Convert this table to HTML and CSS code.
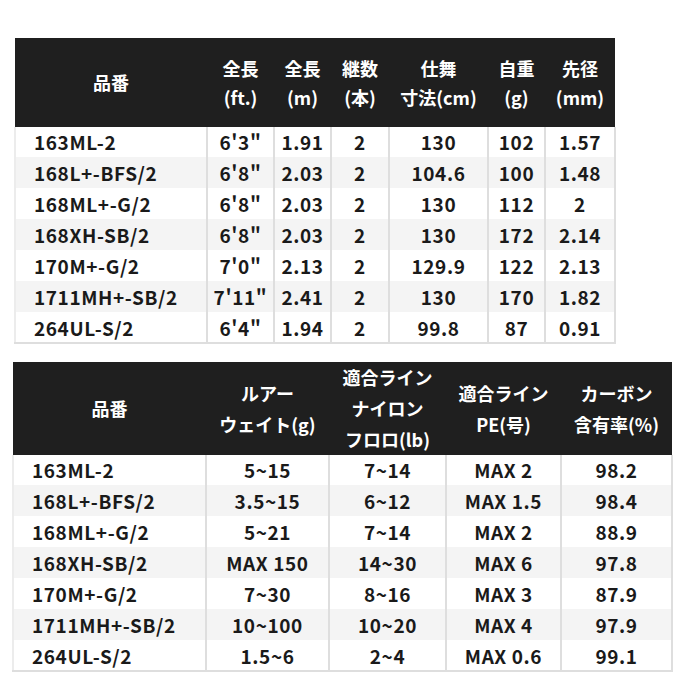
FILE: index.html
```html
<!DOCTYPE html>
<html lang="ja">
<head>
<meta charset="utf-8">
<link rel="stylesheet" href="styles.css">
</head>
<body>
<div class="page">
  <table class="spec spec-a">
    <colgroup>
      <col style="width:192px"><col style="width:67px"><col style="width:57px"><col style="width:58px"><col style="width:99px"><col style="width:57px"><col style="width:70px">
    </colgroup>
    <thead>
      <tr>
        <th>品番</th>
        <th>全長<br>(ft.)</th>
        <th>全長<br>(m)</th>
        <th>継数<br>(本)</th>
        <th>仕舞<br>寸法(cm)</th>
        <th>自重<br>(g)</th>
        <th>先径<br>(mm)</th>
      </tr>
    </thead>
    <tbody>
      <tr><td>163ML-2</td><td>6'3"</td><td>1.91</td><td>2</td><td>130</td><td>102</td><td>1.57</td></tr>
      <tr><td>168L+-BFS/2</td><td>6'8"</td><td>2.03</td><td>2</td><td>104.6</td><td>100</td><td>1.48</td></tr>
      <tr><td>168ML+-G/2</td><td>6'8"</td><td>2.03</td><td>2</td><td>130</td><td>112</td><td>2</td></tr>
      <tr><td>168XH-SB/2</td><td>6'8"</td><td>2.03</td><td>2</td><td>130</td><td>172</td><td>2.14</td></tr>
      <tr><td>170M+-G/2</td><td>7'0"</td><td>2.13</td><td>2</td><td>129.9</td><td>122</td><td>2.13</td></tr>
      <tr><td>1711MH+-SB/2</td><td>7'11"</td><td>2.41</td><td>2</td><td>130</td><td>170</td><td>1.82</td></tr>
      <tr><td>264UL-S/2</td><td>6'4"</td><td>1.94</td><td>2</td><td>99.8</td><td>87</td><td>0.91</td></tr>
    </tbody>
  </table>

  <table class="spec spec-b">
    <colgroup>
      <col style="width:193px"><col style="width:123px"><col style="width:117px"><col style="width:115px"><col style="width:111px">
    </colgroup>
    <thead>
      <tr>
        <th>品番</th>
        <th>ルアー<br>ウェイト(g)</th>
        <th>適合ライン<br>ナイロン<br>フロロ(lb)</th>
        <th>適合ライン<br>PE(号)</th>
        <th>カーボン<br>含有率(%)</th>
      </tr>
    </thead>
    <tbody>
      <tr><td>163ML-2</td><td>5~15</td><td>7~14</td><td>MAX 2</td><td>98.2</td></tr>
      <tr><td>168L+-BFS/2</td><td>3.5~15</td><td>6~12</td><td>MAX 1.5</td><td>98.4</td></tr>
      <tr><td>168ML+-G/2</td><td>5~21</td><td>7~14</td><td>MAX 2</td><td>88.9</td></tr>
      <tr><td>168XH-SB/2</td><td>MAX 150</td><td>14~30</td><td>MAX 6</td><td>97.8</td></tr>
      <tr><td>170M+-G/2</td><td>7~30</td><td>8~16</td><td>MAX 3</td><td>87.9</td></tr>
      <tr><td>1711MH+-SB/2</td><td>10~100</td><td>10~20</td><td>MAX 4</td><td>97.9</td></tr>
      <tr><td>264UL-S/2</td><td>1.5~6</td><td>2~4</td><td>MAX 0.6</td><td>99.1</td></tr>
    </tbody>
  </table>
</div>
</body>
</html>
```

FILE: styles.css
```css
html, body {
  margin: 0;
  padding: 0;
  background: #ffffff;
}

.page {
  display: flex;
  flex-direction: column;
  align-items: flex-start;
  padding-top: 38px;
  gap: 18px;
  font-family: "Noto Sans CJK JP", "Noto Sans", sans-serif;
  color: #1a1a1a;
}

.spec {
  border-collapse: collapse;
  table-layout: fixed;
  font-size: 19px;
  font-weight: 700;
}

.spec-a {
  margin-left: 14px;
}

.spec-b {
  margin-left: 12px;
}

.spec th {
  background: #1f1f1f;
  color: #ffffff;
  font-size: 18px;
  font-weight: 700;
  text-align: center;
  padding: 0;
  border: none;
}

.spec-a th {
  height: 89px;
  line-height: 29px;
}

.spec-b th {
  height: 88px;
  line-height: 31px;
}

.spec td {
  height: 29px;
  padding: 0;
  text-align: center;
  line-height: 29px;
  letter-spacing: 0.6px;
  border: 2px solid #dedede;
  border-top: none;
  white-space: nowrap;
}

.spec td:first-child {
  text-align: left;
  padding-left: 18px;
  border-left: 2px solid #ececec;
}

.spec tbody tr:nth-child(even) td {
  background: #f4f4f4;
}

.spec tbody tr:nth-child(even) td,
.spec tbody tr:nth-child(odd) td {
  border-bottom-color: transparent;
}

.spec tbody tr:last-child td {
  border-bottom: 2px solid #dedede;
}
```
